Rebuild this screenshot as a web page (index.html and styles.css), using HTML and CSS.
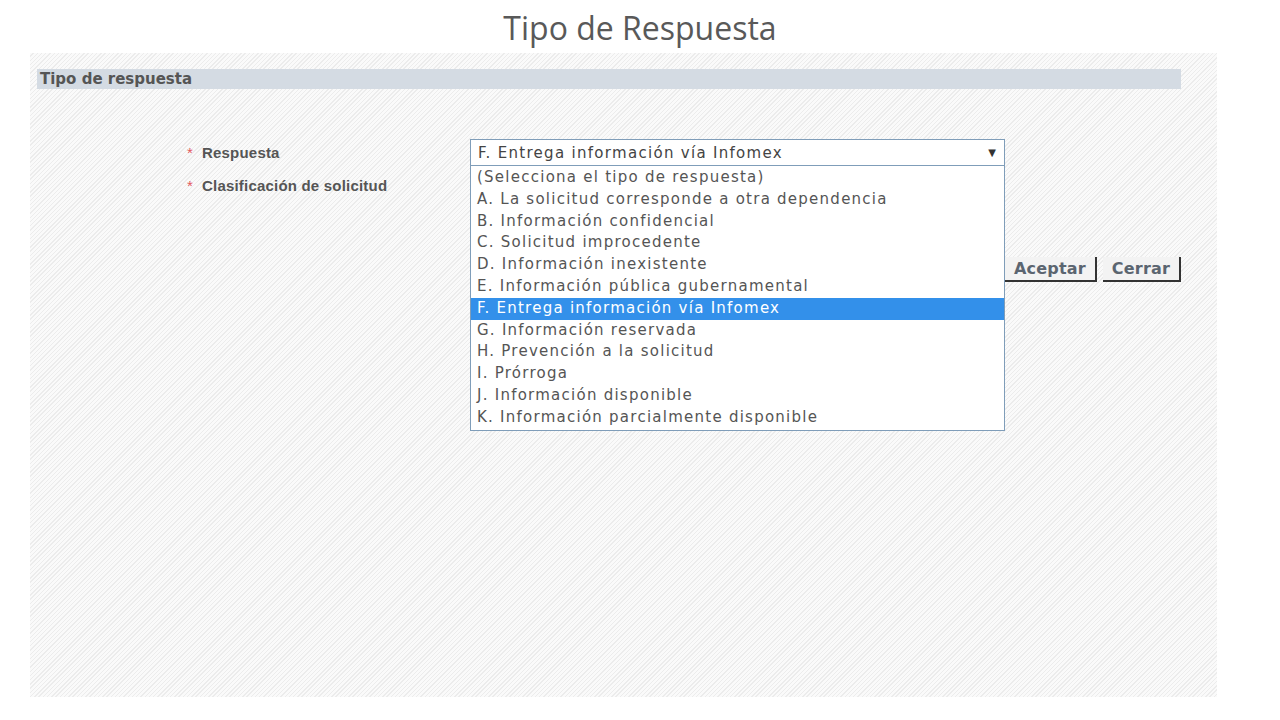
FILE: index.html
```html
<!DOCTYPE html>
<html lang="es">
<head>
    <meta charset="UTF-8">
    <title>Tipo de Respuesta</title>
    <link rel="stylesheet" href="styles.css">
</head>
<body>
    <h1 class="page-title">Tipo de Respuesta</h1>

    <div class="panel">
        <div class="panel-header">Tipo de respuesta</div>

        <div class="form">
            <div class="row">
                <label class="label"><span class="req">*</span>Respuesta</label>
                <div class="select-wrap">
                    <div class="select">
                        <span>F. Entrega información vía Infomex</span>
                        <span class="arrow">&#9660;</span>
                    </div>
                    <ul class="options">
                        <li>(Selecciona el tipo de respuesta)</li>
                        <li>A. La solicitud corresponde a otra dependencia</li>
                        <li>B. Información confidencial</li>
                        <li>C. Solicitud improcedente</li>
                        <li>D. Información inexistente</li>
                        <li>E. Información pública gubernamental</li>
                        <li class="selected">F. Entrega información vía Infomex</li>
                        <li>G. Información reservada</li>
                        <li>H. Prevención a la solicitud</li>
                        <li>I. Prórroga</li>
                        <li>J. Información disponible</li>
                        <li>K. Información parcialmente disponible</li>
                    </ul>
                </div>
            </div>
            <div class="row row-second">
                <label class="label"><span class="req">*</span>Clasificación de solicitud</label>
            </div>

            <div class="actions">
                <button class="btn btn-accept">Aceptar</button>
                <button class="btn btn-close">Cerrar</button>
            </div>
        </div>
    </div>
</body>
</html>
```

FILE: styles.css
```css
body {
    margin: 0;
    background-color: #ffffff;
    font-family: "DejaVu Sans", Verdana, sans-serif;
}

.page-title {
    margin: 0;
    height: 53px;
    padding-top: 8px;
    box-sizing: border-box;
    text-align: center;
    font-family: "Open Sans", "Liberation Sans", sans-serif;
    font-weight: normal;
    font-size: 32px;
    line-height: 40px;
    color: #595959;
}

.panel {
    margin-left: 30px;
    width: 1187px;
    height: 644px;
    box-sizing: border-box;
    padding: 16px 36px 0 7px;
    background-color: #f9f9f9;
    background-image: repeating-linear-gradient(135deg, #fafafa 0, #fafafa 2px, #ececec 2px, #ececec 3px);
}

.panel-header {
    height: 20px;
    line-height: 20px;
    padding-left: 3px;
    background-color: #d4dbe3;
    color: #555555;
    font-weight: bold;
    font-size: 15px;
}

.form {
    margin: 50px 0 0 150px;
}

.row {
    display: flex;
    align-items: center;
    height: 27px;
}

.row-second {
    margin-top: 6px;
}

.label {
    width: 283px;
    font-family: "Liberation Sans", Arial, sans-serif;
    font-weight: bold;
    font-size: 15px;
    letter-spacing: 0.2px;
    color: #555555;
}

.req {
    display: inline-block;
    width: 15px;
    color: #e2595d;
    font-weight: normal;
    font-size: 15px;
}

.select-wrap {
    position: relative;
    width: 535px;
}

.select {
    display: flex;
    justify-content: space-between;
    align-items: center;
    height: 27px;
    box-sizing: border-box;
    padding: 0 8px 0 7px;
    border: 1px solid #7f9db9;
    background-color: #ffffff;
    font-size: 15px;
    letter-spacing: 1.3px;
    color: #444444;
}

.arrow {
    font-size: 10px;
    letter-spacing: 0;
    color: #333333;
}

.options {
    position: absolute;
    top: 26px;
    left: 0;
    width: 535px;
    box-sizing: border-box;
    margin: 0;
    padding: 1px 0;
    list-style: none;
    border: 1px solid #7f9db9;
    background-color: #ffffff;
    z-index: 2;
}

.options li {
    height: 21.8px;
    line-height: 21.8px;
    padding-left: 6px;
    font-size: 15px;
    letter-spacing: 1.25px;
    color: #555555;
    white-space: nowrap;
}

.options li.selected {
    background-color: #3390ea;
    color: #ffffff;
}

.actions {
    display: flex;
    justify-content: flex-end;
    gap: 6px;
    margin-top: 58px;
}

.btn {
    height: 25px;
    padding: 0;
    border: none;
    border-right: 2px solid #333333;
    border-bottom: 2px solid #333333;
    background-color: #f3f3f3;
    font-family: "DejaVu Sans", Verdana, sans-serif;
    font-weight: bold;
    font-size: 16px;
    letter-spacing: 0.2px;
    color: #5b6570;
    cursor: pointer;
}

.btn-accept {
    width: 92px;
}

.btn-close {
    width: 78px;
}
```
